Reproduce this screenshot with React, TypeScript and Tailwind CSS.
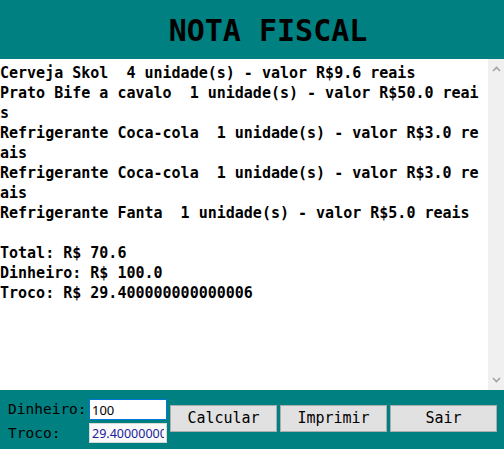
import React from "react";

const lines = [
  "Cerveja Skol  4 unidade(s) - valor R$9.6 reais",
  "Prato Bife a cavalo  1 unidade(s) - valor R$50.0 reais",
  "Refrigerante Coca-cola  1 unidade(s) - valor R$3.0 reais",
  "Refrigerante Coca-cola  1 unidade(s) - valor R$3.0 reais",
  "Refrigerante Fanta  1 unidade(s) - valor R$5.0 reais",
  "",
  "Total: R$ 70.6",
  "Dinheiro: R$ 100.0",
  "Troco: R$ 29.400000000000006",
];

const mono = { fontFamily: '"DejaVu Sans Mono", "Liberation Mono", monospace' };

function Chevron({ up }: { up?: boolean }) {
  return (
    <svg width="9" height="6" viewBox="0 0 9 6" className="text-[#a3a3a3]">
      <path
        d={up ? "M1 5 L4.5 1.5 L8 5" : "M1 1 L4.5 4.5 L8 1"}
        fill="none"
        stroke="currentColor"
        strokeWidth="1.6"
      />
    </svg>
  );
}

export default function App() {
  return (
    <div className="w-[504px] h-[449px] flex flex-col bg-white overflow-hidden" style={mono}>
      {/* Title */}
      <div className="h-[59px] bg-[#008080] flex items-center justify-center pl-[32px] pt-[2px]">
        <h1 className="text-[30px] font-bold text-black leading-none">NOTA FISCAL</h1>
      </div>

      {/* Receipt text + scrollbar */}
      <div className="flex-1 flex min-h-0">
        <div className="flex-1 pt-[4px]">
          <div className="w-[480px] text-[15px] leading-[20px] font-bold text-black whitespace-pre-wrap break-all">
            {lines.map((l, i) => (
              <div key={i} className="min-h-[20px]">{l}</div>
            ))}
          </div>
        </div>
        <div className="w-[16px] bg-[#f0f0f0] flex flex-col items-center justify-between py-[7px]">
          <Chevron up />
          <Chevron />
        </div>
      </div>

      {/* Footer */}
      <div className="h-[59px] bg-[#008080] flex pl-[8px] pt-[9px]">
        <div className="flex flex-col gap-[3px]">
          <div className="flex items-center h-[21px]">
            <span className="w-[81px] text-[14.5px] text-black leading-none">Dinheiro:</span>
            <input
              defaultValue="100"
              className="w-[78px] h-[21px] bg-white border border-[#0078d7] px-[2px] text-[13px] text-black outline-none"
              style={{ fontFamily: '"Noto Sans", "Liberation Sans", sans-serif' }}
            />
          </div>
          <div className="flex items-center h-[20px]">
            <span className="w-[81px] text-[14.5px] text-black leading-none">Troco:</span>
            <input
              readOnly
              value="29.400000000000006"
              className="w-[78px] h-[20px] bg-[#fafafa] border border-[#d9d9d9] px-[2px] text-[12.5px] text-[#1c1c9c] outline-none"
              style={{ fontFamily: '"Noto Sans", "Liberation Sans", sans-serif' }}
            />
          </div>
        </div>
        <div className="flex gap-[3px] ml-[3px] mt-[6px]">
          {["Calcular", "Imprimir", "Sair"].map((b) => (
            <button
              key={b}
              className="w-[107px] h-[27px] bg-[#e1e1e1] border border-[#adadad] text-[15px] text-black leading-none"
            >
              {b}
            </button>
          ))}
        </div>
      </div>
    </div>
  );
}
